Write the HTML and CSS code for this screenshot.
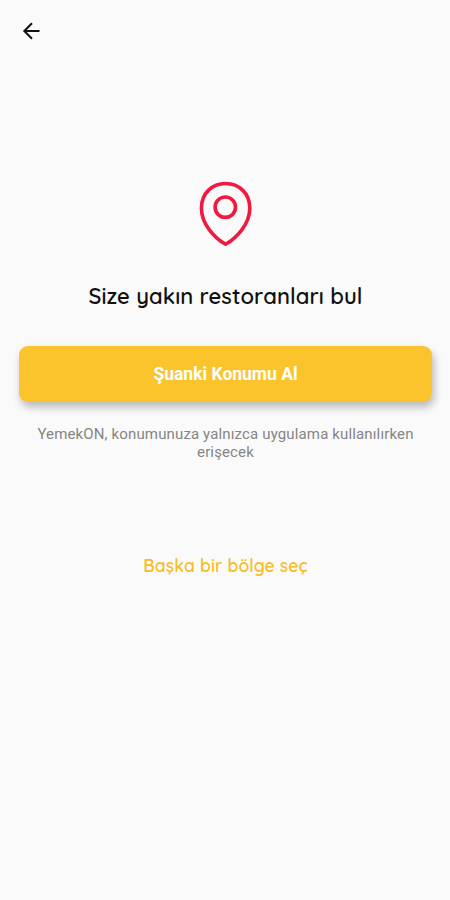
FILE: index.html
```html
<!DOCTYPE html>
<html lang="tr">
<head>
    <meta charset="UTF-8">
    <meta name="viewport" content="width=device-width, initial-scale=1.0">
    <title>YemekON - Konum</title>
    <link rel="stylesheet" href="styles.css">
</head>
<body>
    <header class="top-bar">
        <button type="button" class="back-btn" aria-label="Geri">
            <svg width="18" height="18" viewBox="0 0 18 18" fill="none" stroke="#111" stroke-width="2">
                <path d="M17.5 9H2.5M10 1.3L2.3 9l7.7 7.7"/>
            </svg>
        </button>
    </header>

    <main class="location">
        <svg class="pin" width="54" height="66" viewBox="0 0 54 66" fill="none" stroke="#f0193f" stroke-width="3.6" stroke-linejoin="round">
            <path d="M26.6 63.3C15.6 57 2.4 43 2.4 27.2C2.4 12 13.4 2.5 26.6 2.5S50.8 12 50.8 27.2C50.8 43 37.6 57 26.6 63.3Z"/>
            <circle cx="26.3" cy="26.2" r="10.2"/>
        </svg>

        <h1>Size yakın restoranları bul</h1>

        <button type="button" class="submit-btn">Şuanki Konumu Al</button>

        <p class="note">YemekON, konumunuza yalnızca uygulama kullanılırken erişecek</p>

        <a href="#" class="region-link">Başka bir bölge seç</a>
    </main>
</body>
</html>
```
FILE: styles.css
```css
* {
    box-sizing: border-box;
    margin: 0;
    padding: 0;
}

body {
    font-family: Roboto, sans-serif;
    background: #fafafa;
    min-height: 100vh;
}

.top-bar {
    height: 62px;
    padding: 22px;
}

.back-btn {
    display: block;
    width: 18px;
    height: 18px;
    background: none;
    border: none;
    cursor: pointer;
}

.back-btn svg {
    display: block;
}

.location {
    display: flex;
    flex-direction: column;
    align-items: center;
    padding: 119px 18px 0 19px;
}

.pin {
    display: block;
}

h1 {
    margin-top: 35px;
    color: #111;
    font-family: Quicksand, Lato, sans-serif;
    font-size: 22px;
    font-weight: 600;
    line-height: 28px;
    letter-spacing: 0.1px;
    white-space: nowrap;
}

.submit-btn {
    width: 100%;
    height: 56px;
    margin-top: 36px;
    background: #fbc42d;
    color: white;
    border: none;
    border-radius: 9px;
    box-shadow: 2px 5px 9px rgba(0, 0, 0, 0.27);
    font-family: inherit;
    font-size: 17.5px;
    font-weight: 700;
    cursor: pointer;
}

.note {
    width: 390px;
    margin-top: 23px;
    color: #858585;
    font-size: 15px;
    line-height: 18px;
    letter-spacing: 0.14px;
    text-align: center;
}

.region-link {
    margin-top: 92px;
    color: #f6bd27;
    font-family: Quicksand, Lato, sans-serif;
    font-size: 17.5px;
    font-weight: 600;
    line-height: 24px;
    letter-spacing: 0.1px;
    text-decoration: none;
}
```
